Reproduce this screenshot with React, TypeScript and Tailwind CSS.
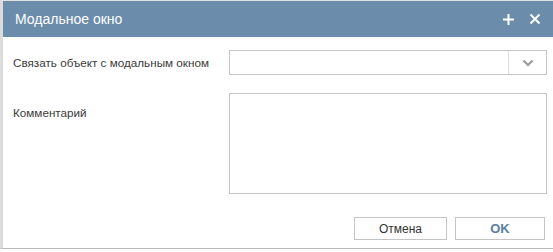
import React from 'react';

const font = { fontFamily: '"Liberation Sans", Arial, sans-serif' };

const ModalWindow: React.FC = () => {
  return (
    <div className="w-[553px] h-[252px] bg-white overflow-hidden" style={font}>
      <div className="h-[249px] flex flex-col border-l-[3px] border-l-[#dcdcdc] border-t border-t-[#e3e3e3] border-b border-b-[#b9b9b9]">
        <header className="h-[36px] bg-[#6b8cab] flex items-center pl-[12px] pr-[12px] text-white">
          <h3 className="flex-1 text-[14px] leading-none">Модальное окно</h3>
          <svg width="13" height="13" viewBox="0 0 13 13" className="mr-[14px]">
            <path d="M6.5 1v11M1 6.5h11" stroke="white" strokeWidth="2" />
          </svg>
          <svg width="12" height="12" viewBox="0 0 12 12">
            <path d="M1.5 1.5l9 9M10.5 1.5l-9 9" stroke="white" strokeWidth="2" />
          </svg>
        </header>

        <div className="flex-1 flex flex-col pl-[10px] pr-[6px] pt-[13px]">
          <div className="flex items-center h-[25px]">
            <label className="w-[216px] whitespace-nowrap text-[11.7px] text-[#3a3a3a]">Связать объект с модальным окном</label>
            <div className="flex-1 h-[25px] border border-[#c4c4c4] flex">
              <div className="flex-1" />
              <div className="w-[38px] border-l border-l-[#e0e0e0] flex items-center justify-center">
                <svg width="12" height="8" viewBox="0 0 12 8">
                  <path d="M1.5 1.5l4.5 4.5 4.5-4.5" fill="none" stroke="#9a9a9a" strokeWidth="2.2" />
                </svg>
              </div>
            </div>
          </div>

          <div className="flex mt-[18px]">
            <label className="w-[216px] text-[11.7px] text-[#3a3a3a] pt-[11px]">Комментарий</label>
            <div className="flex-1 h-[101px] border border-[#c4c4c4]" />
          </div>

          <div className="flex justify-end gap-[8px] mt-[23px] pr-[2px]">
            <button className="w-[93px] h-[23px] border border-[#c4c4c4] bg-white text-[12px] text-[#333]">Отмена</button>
            <button className="w-[90px] h-[23px] border border-[#c4c4c4] bg-white text-[13px] font-bold text-[#5a7fa3]">OK</button>
          </div>
        </div>
      </div>
    </div>
  );
};

export default function App() {
  return <ModalWindow />;
}
